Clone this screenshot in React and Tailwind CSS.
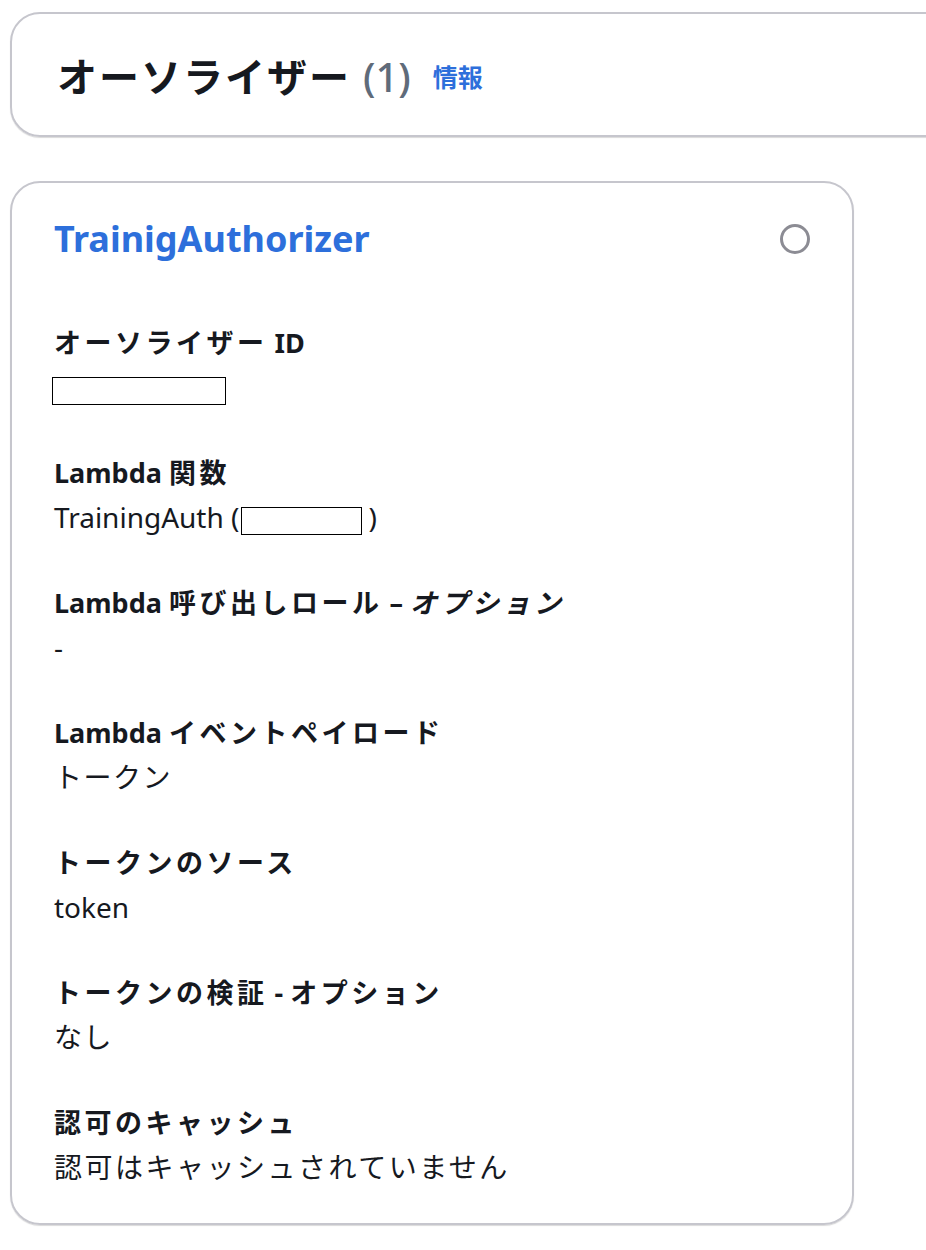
import React from "react";

const J = ({ children, className = "tracking-[3.5px]" }) => (
  <span className={className}>{children}</span>
);

const Redacted = ({ w }) => (
  <span
    className="inline-block h-[28px] border border-black bg-white align-middle"
    style={{ width: w }}
  />
);

const Field = ({ label, children }) => (
  <div className="flex flex-col">
    <div className="text-[27px] leading-[44px] font-bold text-[#16191f]">{label}</div>
    <div className="text-[28px] leading-[44px] text-[#16191f]">{children}</div>
  </div>
);

export default function App() {
  return (
    <div className="w-[926px] h-[1250px] overflow-hidden bg-white pt-[12px] pl-[10px] font-['Noto_Sans','Noto_Sans_CJK_JP',sans-serif]">
      <div className="w-[1000px] h-[125px] border-2 border-[#c6c6cd] rounded-[30px] shadow-[0_1px_1px_rgba(0,0,0,0.15)] flex items-center pl-[45px] pt-[5px]">
        <h1 className="text-[40px] font-bold text-[#16191f] tracking-[2px] leading-none">オーソライザー</h1>
        <span className="text-[40px] text-[#5f6b7a] font-medium leading-none ml-[12px]">(1)</span>
        <span className="text-[25px] font-bold text-[#2d6fdb] leading-none ml-[22px]">情報</span>
      </div>

      <div className="mt-[44px] w-[844px] border-2 border-[#c6c6cd] rounded-[30px] shadow-[0_1px_1px_rgba(0,0,0,0.15)] px-[42px] pt-[34px] pb-[34px]">
        <div className="flex items-center justify-between h-[44px]">
          <div className="text-[36px] font-bold text-[#2d6fdb] leading-[44px]">TrainigAuthorizer</div>
          <div className="w-[30px] h-[30px] rounded-full border-[3px] border-[#8c8c94]" />
        </div>

        <div className="mt-[60px] flex flex-col gap-[42px]">
          <Field label={<><J>オーソライザー</J> ID</>}>
            <span className="inline-block -ml-[2px]">
              <Redacted w={174} />
            </span>
          </Field>
          <Field label={<>Lambda <J>関数</J></>}>
            TrainingAuth (<span className="inline-block ml-[2px] mr-[6px]"><Redacted w={121} /></span>)
          </Field>
          <Field label={<>Lambda <J>呼び出しロール</J> – <J className="italic tracking-[4px]">オプション</J></>}>
            -
          </Field>
          <Field label={<>Lambda <J>イベントペイロード</J></>}>
            <J className="tracking-[1.5px]">トークン</J>
          </Field>
          <Field label={<J>トークンのソース</J>}>token</Field>
          <Field label={<><J>トークンの検証</J> - <J>オプション</J></>}>
            <J className="tracking-[1.5px]">なし</J>
          </Field>
          <Field label={<J>認可のキャッシュ</J>}>
            <J className="tracking-[2.5px]">認可はキャッシュされていません</J>
          </Field>
        </div>
      </div>
    </div>
  );
}
